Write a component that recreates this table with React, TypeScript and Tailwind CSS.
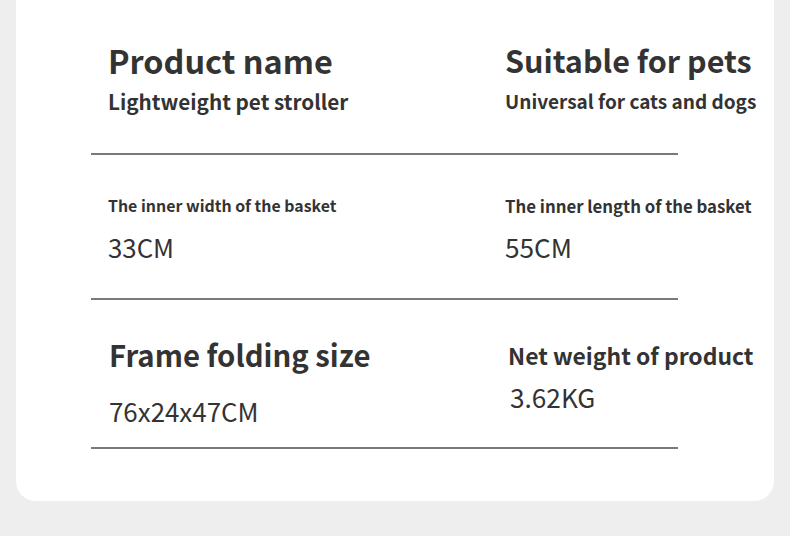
export default function App() {
    return (
        <div className="h-[536px] w-[790px] bg-[#eeeeee] text-[#333333] [font-family:'Noto_Sans_CJK_SC','Noto_Sans',sans-serif]">
            <div className="ml-[16px] w-[758px] h-[501px] bg-white rounded-b-[20px] flex flex-col">
                {/* Product name / pets */}
                <div className="h-[153px] grid grid-cols-[397px_1fr] pl-[92px]">
                    <div className="pt-[44px]">
                        <div className="text-[32.4px] font-bold leading-none">Product name</div>
                        <div className="mt-[15px] text-[20.7px] font-bold leading-none">Lightweight pet stroller</div>
                    </div>
                    <div className="pt-[44.5px]">
                        <div className="text-[30.5px] font-bold leading-none">Suitable for pets</div>
                        <div className="mt-[16px] text-[19px] font-bold leading-none">Universal for cats and dogs</div>
                    </div>
                </div>
                <div className="ml-[75px] w-[587px] h-[2px] bg-[#7a7a7a]"></div>

                {/* Basket size */}
                <div className="h-[143px] grid grid-cols-[397px_1fr] pl-[92px]">
                    <div className="pt-[43px]">
                        <div className="text-[15.9px] font-bold leading-none">The inner width of the basket</div>
                        <div className="mt-[20px] text-[25.8px] leading-none">33CM</div>
                    </div>
                    <div className="pt-[42.5px]">
                        <div className="text-[16.8px] font-bold leading-none">The inner length of the basket</div>
                        <div className="mt-[19.5px] text-[26.2px] leading-none">55CM</div>
                    </div>
                </div>
                <div className="ml-[75px] w-[587px] h-[2px] bg-[#7a7a7a]"></div>

                {/* Folding size / weight */}
                <div className="h-[147px] grid grid-cols-[397px_1fr] pl-[92px]">
                    <div className="pt-[40px] pl-[1px]">
                        <div className="text-[29.3px] font-bold leading-none">Frame folding size</div>
                        <div className="mt-[29px] text-[25.9px] leading-none">76x24x47CM</div>
                    </div>
                    <div className="pt-[44px] pl-[3px]">
                        <div className="text-[22.9px] font-bold leading-none">Net weight of product</div>
                        <div className="mt-[17px] pl-[2px] text-[26.2px] leading-none">3.62KG</div>
                    </div>
                </div>
                <div className="ml-[75px] w-[587px] h-[2px] bg-[#7a7a7a]"></div>
            </div>
        </div>
    );
}
